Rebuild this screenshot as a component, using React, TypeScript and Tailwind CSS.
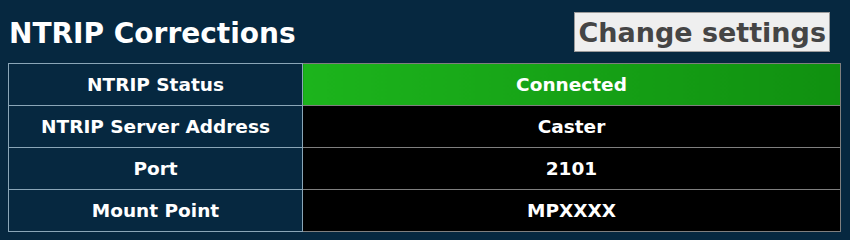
import React from 'react'

const rows = [
    { label: 'NTRIP Status', value: 'Connected', ok: true },
    { label: 'NTRIP Server Address', value: 'Caster' },
    { label: 'Port', value: '2101' },
    { label: 'Mount Point', value: 'MPXXXX' },
]

const App: React.FC = () => {
    return (
        <div className="w-[850px] h-[240px] bg-[#062840] font-['DejaVu_Sans',Verdana,sans-serif] text-white">
            {/* header */}
            <div className="flex items-center justify-between pl-[9px] pr-[20px] pt-[11px] h-[52px]">
                <h1 className="text-[28px] font-bold leading-none mt-[4px]">NTRIP Corrections</h1>
                <button className="h-[40px] px-[3px] bg-[#efefef] border border-[#9a9a9a] text-[#454545] text-[27px] font-bold leading-none pt-[2px]">
                    Change settings
                </button>
            </div>

            {/* table */}
            <table className="ml-[8px] mt-[11px] w-[833px] border-collapse text-[18.5px] font-bold">
                <tbody>
                    {rows.map((row) => (
                        <tr key={row.label} className="h-[42px]">
                            <td className="w-[294px] border border-[#8aa6b8] text-center">{row.label}</td>
                            <td
                                className={
                                    row.ok
                                        ? 'border border-[#7f7f7f] text-center bg-gradient-to-r from-[#1cb41c] to-[#109010]'
                                        : 'border border-[#7f7f7f] text-center bg-black'
                                }
                            >
                                {row.value}
                            </td>
                        </tr>
                    ))}
                </tbody>
            </table>
        </div>
    )
}

export default App
